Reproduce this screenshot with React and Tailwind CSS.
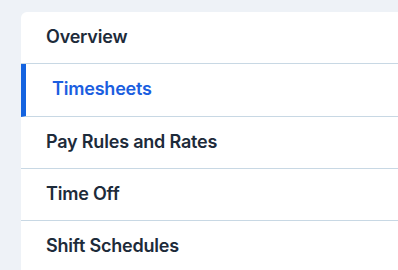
export default function App() {
  const items = ["Overview", "Timesheets", "Pay Rules and Rates", "Time Off", "Shift Schedules"];
  return (
    <div className="w-[398px] h-[270px] overflow-hidden bg-[#eef2f7] pt-[12px] pl-[21px]" style={{ fontFamily: "Inter, 'Noto Sans', sans-serif" }}>
      <div className="bg-white rounded-tl-[6px] h-[300px]">
        {items.map((label) => {
          const active = label === "Timesheets";
          return (
            <div
              key={label}
              className={`h-[52.33px] flex items-center pb-[2px] border-b border-[#c8d8e4] ${active ? "border-l-[5px] border-l-[#1463e0] pl-[26px] text-[#1b5ee0]" : "pl-[25px] text-[#1d2b3a]"}`}
            >
              <span className="text-[18px] font-semibold tracking-[-0.2px]">{label}</span>
            </div>
          );
        })}
      </div>
    </div>
  );
}
